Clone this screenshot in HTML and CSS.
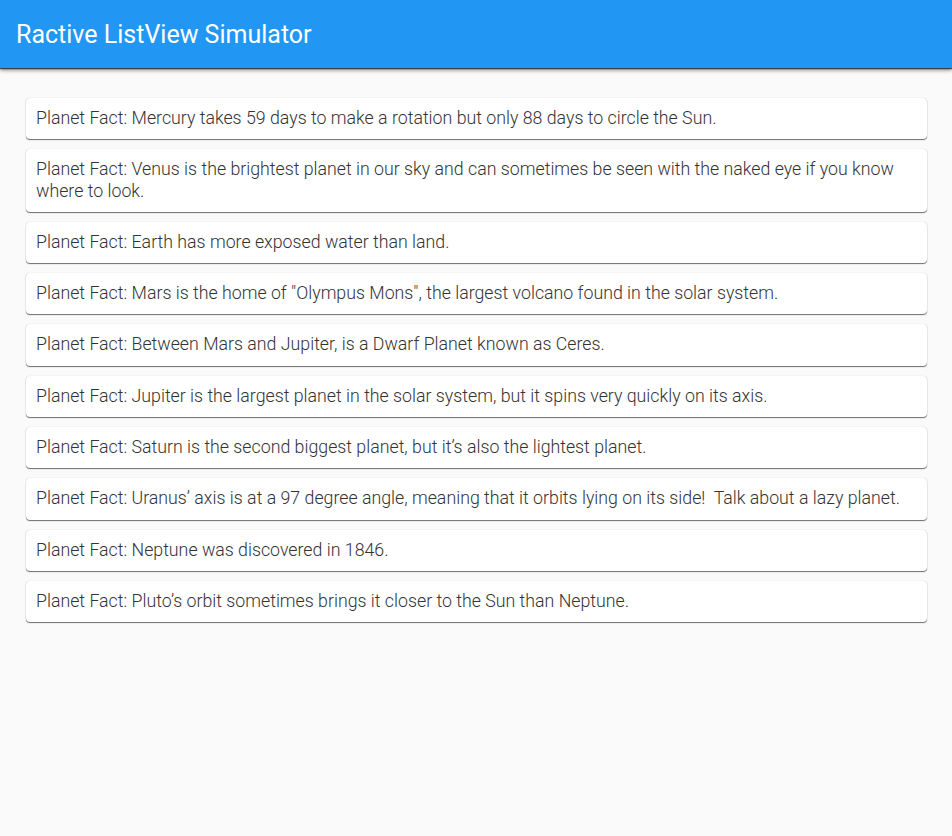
FILE: index.html
```html
<!DOCTYPE html>
<html>
<head>
<meta charset="utf-8">
<link rel="stylesheet" href="styles.css">
</head>
<body>
<header class="appbar">
  <h1 class="title">Ractive ListView Simulator</h1>
</header>
<main class="list">
  <div class="card">Planet Fact: Mercury takes 59 days to make a rotation but only 88 days to circle the Sun.</div>
  <div class="card">Planet Fact: Venus is the brightest planet in our sky and can sometimes be seen with the naked eye if you know where to look.</div>
  <div class="card">Planet Fact: Earth has more exposed water than land.</div>
  <div class="card">Planet Fact: Mars is the home of "Olympus Mons", the largest volcano found in the solar system.</div>
  <div class="card">Planet Fact: Between Mars and Jupiter, is a Dwarf Planet known as Ceres.</div>
  <div class="card">Planet Fact: Jupiter is the largest planet in the solar system, but it spins very quickly on its axis.</div>
  <div class="card">Planet Fact: Saturn is the second biggest planet, but it’s also the lightest planet.</div>
  <div class="card">Planet Fact: Uranus’ axis is at a 97 degree angle, meaning that it orbits lying on its side!&nbsp; Talk about a lazy planet.</div>
  <div class="card">Planet Fact: Neptune was discovered in 1846.</div>
  <div class="card">Planet Fact: Pluto’s orbit sometimes brings it closer to the Sun than Neptune.</div>
</main>
</body>
</html>
```
FILE: styles.css
```css
html, body {
  margin: 0;
  padding: 0;
  background: #fafafa;
  font-family: Roboto, "Liberation Sans", sans-serif;
}
.appbar {
  height: 68px;
  background: #2196f3;
  display: flex;
  align-items: center;
  padding: 0 16px;
  box-shadow: 0 2px 4px rgba(0,0,0,0.5), 0 1px 1px rgba(0,0,0,0.6);
  position: relative;
}
.title {
  margin: 0;
  color: #fff;
  font-size: 25px;
  font-weight: 400;
}
.list {
  padding: 30px 25px 30px 26px;
  display: flex;
  flex-direction: column;
  gap: 10px;
}
.card {
  background: #fff;
  border-radius: 4px;
  box-shadow: 0 1px 1px rgba(0,0,0,0.55), 0 0 1px rgba(0,0,0,0.25);
  padding: 10px 10px 10px 10px;
  font-size: 17.75px;
  line-height: 1.2;
  font-weight: 300;
  color: #333;
}
```
